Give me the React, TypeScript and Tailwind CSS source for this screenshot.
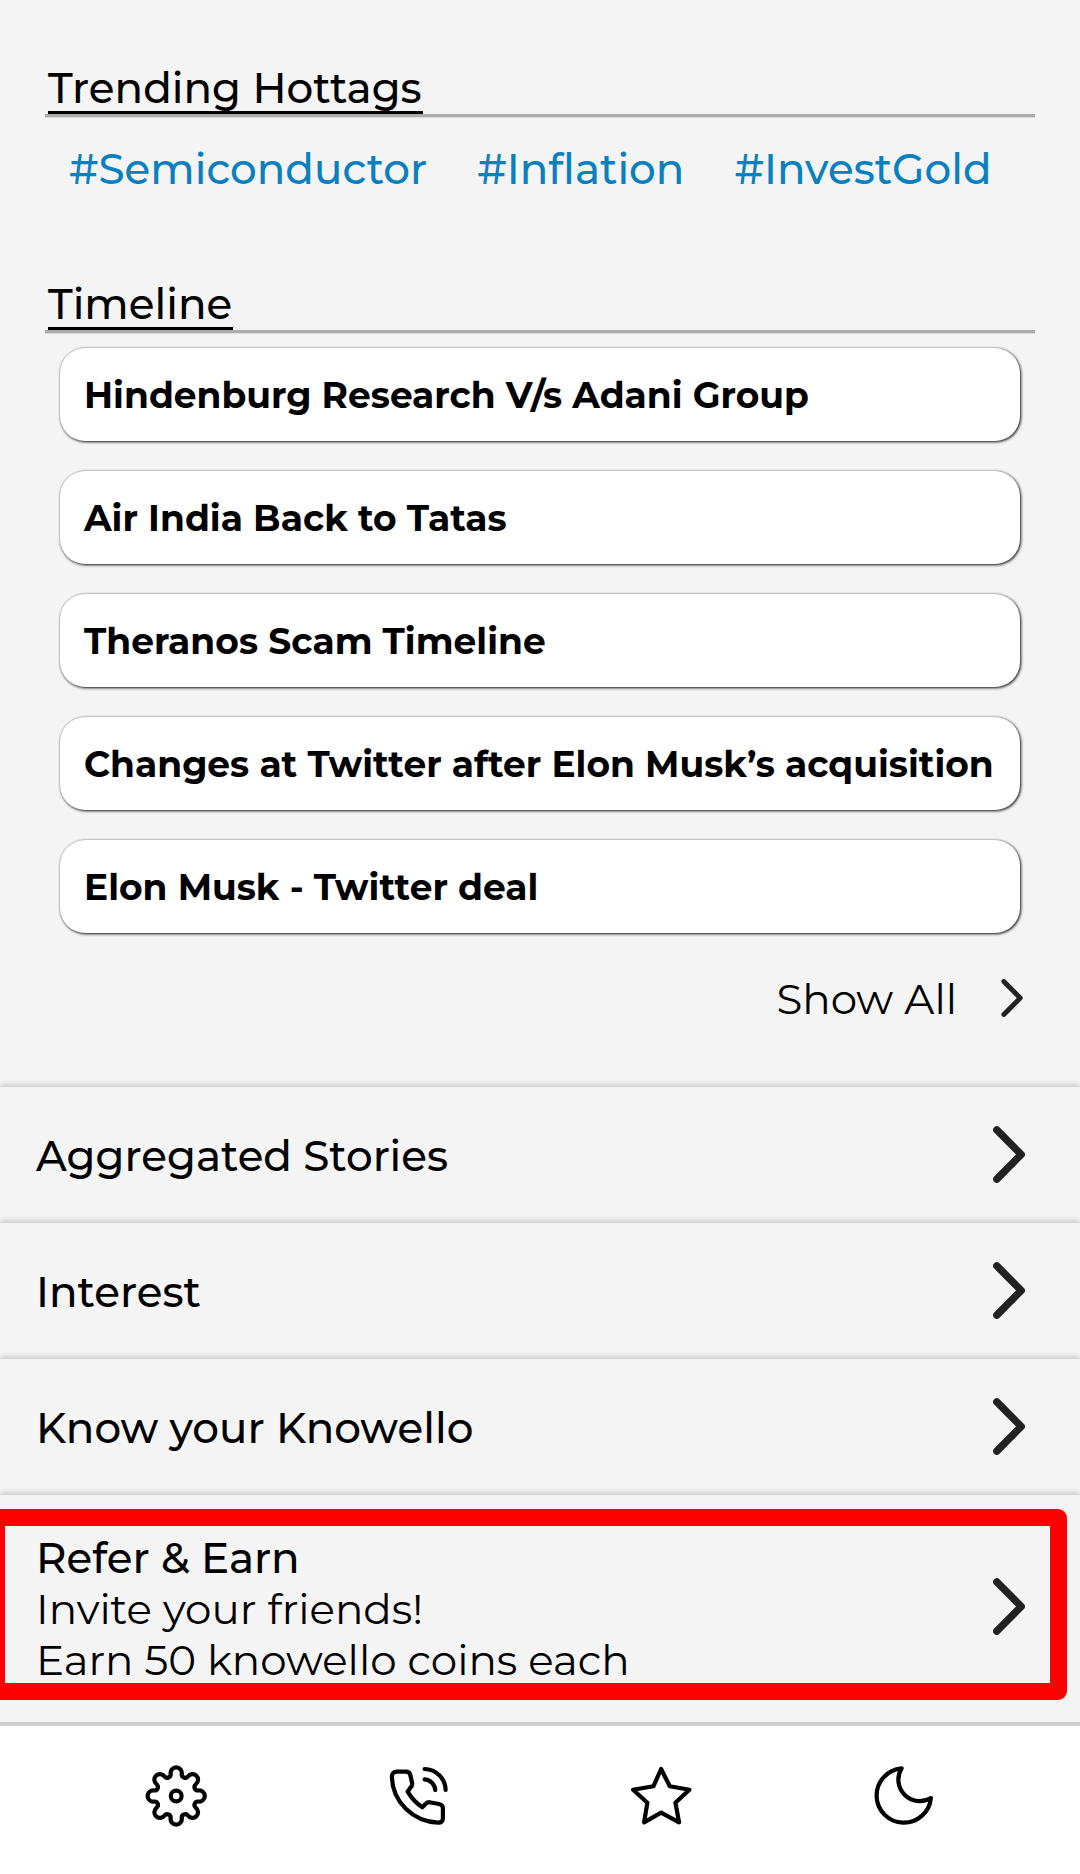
import React from "react";

const timeline = [
  "Hindenburg Research V/s Adani Group",
  "Air India Back to Tatas",
  "Theranos Scam Timeline",
  "Changes at Twitter after Elon Musk’s acquisition",
  "Elon Musk - Twitter deal",
];

const menu = ["Aggregated Stories", "Interest", "Know your Knowello"];

// Outline of an eight-lobed gear centred in a 60x60 box.
function gearPath() {
  const lobeR = 5.6;
  const valleyR = 3.5;
  const lobeD = 22.8;
  const valleyD = 23.5;
  const at = (d: number, deg: number) => {
    const a = (deg * Math.PI) / 180;
    return [30.2 + d * Math.sin(a), 30 - d * Math.cos(a)];
  };
  const mix = (l: number[], v: number[]) => {
    const t = lobeR / (lobeR + valleyR);
    return `${(l[0] + (v[0] - l[0]) * t).toFixed(2)} ${(l[1] + (v[1] - l[1]) * t).toFixed(2)}`;
  };
  let d = "";
  for (let i = 0; i < 8; i++) {
    const lobe = at(lobeD, i * 45);
    const before = mix(lobe, at(valleyD, i * 45 - 22.5));
    const after = mix(lobe, at(valleyD, i * 45 + 22.5));
    d += i === 0 ? `M${before}` : `A${valleyR} ${valleyR} 0 0 0 ${before}`;
    d += `A${lobeR} ${lobeR} 0 1 1 ${after}`;
  }
  const first = mix(at(lobeD, 0), at(valleyD, -22.5));
  return `${d}A${valleyR} ${valleyR} 0 0 0 ${first}Z`;
}

function Chevron({ className }: { className: string }) {
  return (
    <svg viewBox="0 0 32 57" className={className} fill="none" stroke="#222222" strokeWidth="7.4" strokeLinecap="round" strokeLinejoin="round">
      <path d="M3.8 3.9 28.3 28.5 3.8 53.1" />
    </svg>
  );
}

function NavIcon({ children }: { children: React.ReactNode }) {
  return (
    <button className="flex items-center justify-center">
      <svg viewBox="0 0 60 60" className="size-[60px] overflow-visible" fill="none" stroke="#000" strokeWidth="4.2" strokeLinecap="round" strokeLinejoin="round">
        {children}
      </svg>
    </button>
  );
}

function Heading({ title }: { title: string }) {
  return (
    <div className="mx-[45px] border-b-[3px] border-[#adadad] pl-[3px] shadow-[0_1px_0_#dcdcdc]">
      <h2 className="h-[52px] w-fit border-b-[3px] border-black pr-px text-[42px] leading-[52px] font-medium">{title}</h2>
    </div>
  );
}

export default function App() {
  return (
    <div className="flex h-[1874px] w-[1080px] flex-col overflow-hidden bg-[#f4f4f4] font-['Montserrat','Inter',sans-serif] text-black">
      <section className="pt-[62px]">
        <Heading title="Trending Hottags" />
        <div className="mt-[26px] flex gap-[50px] pl-[69px] text-[42px] leading-[52px] font-medium whitespace-nowrap text-[#0a80bf]">
          <a>#Semiconductor</a>
          <a>#Inflation</a>
          <a>#InvestGold</a>
        </div>
      </section>

      <section className="pt-[83px]">
        <Heading title="Timeline" />
        <ul className="mt-[15px] flex flex-col gap-[30px] px-[60px]">
          {timeline.map((t) => (
            <li
              key={t}
              className="flex h-[93px] items-center rounded-[25px] bg-white pl-[24px] text-[36px] font-bold whitespace-nowrap shadow-[1px_1px_3px_rgba(0,0,0,0.9),0_0_2px_rgba(0,0,0,0.3)]"
            >
              {t}
            </li>
          ))}
        </ul>
        <div className="mt-[40px] flex h-[52px] items-center justify-end gap-[44px] pr-[57px] text-[42px] leading-[52px] font-normal">
          <span>Show All</span>
          <Chevron className="mb-[2px] h-[38px] w-[22px]" />
        </div>
      </section>

      <nav className="mt-[62px] flex flex-1 flex-col">
        {menu.map((m) => (
          <div key={m} className="flex h-[136px] items-center justify-between bg-[#f4f4f4] pr-[55px] pl-[36px] shadow-[0_-2px_6px_rgba(0,0,0,0.2)]">
            <span className="pt-[2px] text-[42px] leading-[52px] font-medium">{m}</span>
            <Chevron className="mb-[1px] h-[57px] w-[32px]" />
          </div>
        ))}
        <div className="relative flex-1 bg-[#f4f4f4] pt-[38px] pr-[55px] pl-[36px] shadow-[0_-2px_6px_rgba(0,0,0,0.2)]">
          <div className="flex items-center justify-between">
            <div className="text-[42px] leading-[51px] font-normal">
              <p className="font-medium">Refer &amp; Earn</p>
              <p>Invite your friends!</p>
              <p>Earn 50 knowello coins each</p>
            </div>
            <Chevron className="mb-[7px] h-[57px] w-[32px]" />
          </div>
          <div className="absolute top-[14px] left-0 h-[191px] w-[1067px] rounded-r-[9px] border-[17px] border-l-[5px] border-[#ff0000]" />
        </div>
      </nav>

      <footer className="grid h-[152px] grid-cols-4 border-t-[4px] border-[#d2d2d2] bg-white px-[55px] pb-[8px]">
        <NavIcon>
          <path d={gearPath()} />
          <circle cx="30.2" cy="30" r="5.4" />
        </NavIcon>
        <NavIcon>
          <path d="M2.9 11Q2.9 5.7 8 5.7H16.8Q20.6 5.7 21.3 9L23.2 17.5Q23.4 19.6 21.5 21.5L18.6 25.7Q24.5 35.5 33.3 41.3L36.5 38Q38.3 36.2 40.5 36.2L50 38Q53.9 39 53.9 42V52Q53.9 56.9 49 56.7C24 55.5 3.5 36 2.9 11Z" />
          <path d="M35.6 3A21.5 21.5 0 0 1 56.6 24M35.6 13.3A11.5 11.5 0 0 1 46.3 24" />
        </NavIcon>
        <NavIcon>
          <path d="M30.1 3 38.8 20.3 58.4 23.7 44.4 36.7 48.1 56.3 30.1 46.7 13.1 56.3 16.4 36.7 2.1 23.7 22.4 20.3Z" />
        </NavIcon>
        <NavIcon>
          <path d="M27.6 2.4A27.2 27.2 0 1 0 56.9 32 21.4 21.4 0 0 1 27.6 2.4Z" />
        </NavIcon>
      </footer>
    </div>
  );
}
